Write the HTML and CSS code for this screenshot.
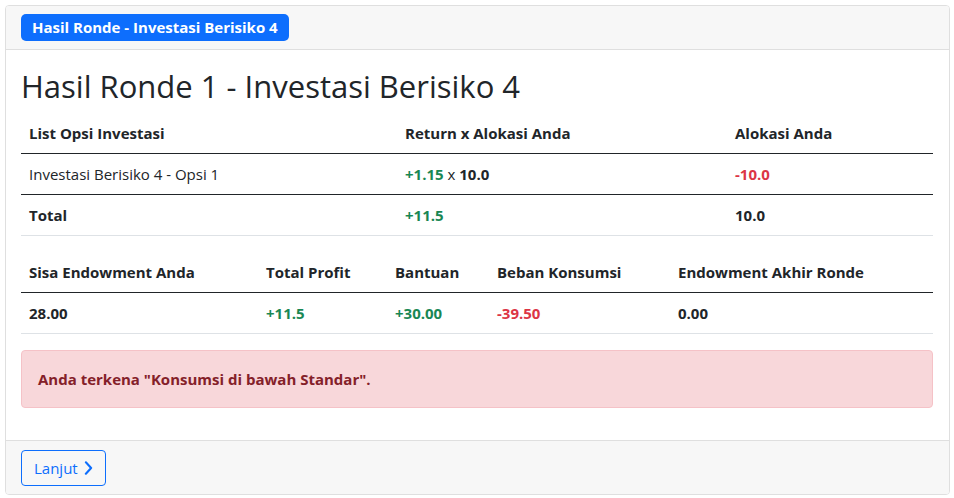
FILE: index.html
```html
<!DOCTYPE html>
<html lang="id">
<head>
<meta charset="utf-8">
<title>Hasil Ronde</title>
<link rel="stylesheet" href="styles.css">
</head>
<body>
<div class="page">
  <div class="card">
    <div class="card-header">
      <span class="badge">Hasil Ronde - Investasi Berisiko 4</span>
    </div>
    <div class="card-body">
      <h1 class="title">Hasil Ronde 1 - Investasi Berisiko 4</h1>
      <table class="tbl tbl-invest">
        <colgroup>
          <col class="c-opsi"><col class="c-return"><col class="c-alokasi">
        </colgroup>
        <thead>
          <tr><th>List Opsi Investasi</th><th>Return x Alokasi Anda</th><th>Alokasi Anda</th></tr>
        </thead>
        <tbody>
          <tr>
            <td>Investasi Berisiko 4 - Opsi 1</td>
            <td><b class="pos">+1.15</b> x <b>10.0</b></td>
            <td><b class="neg">-10.0</b></td>
          </tr>
        </tbody>
        <tfoot>
          <tr><th>Total</th><th class="pos">+11.5</th><th>10.0</th></tr>
        </tfoot>
      </table>
      <table class="tbl tbl-summary">
        <colgroup>
          <col class="c-sisa"><col class="c-profit"><col class="c-bantuan"><col class="c-beban"><col class="c-akhir">
        </colgroup>
        <thead>
          <tr><th>Sisa Endowment Anda</th><th>Total Profit</th><th>Bantuan</th><th>Beban Konsumsi</th><th>Endowment Akhir Ronde</th></tr>
        </thead>
        <tbody>
          <tr><th>28.00</th><th class="pos">+11.5</th><th class="pos">+30.00</th><th class="neg">-39.50</th><th>0.00</th></tr>
        </tbody>
      </table>
      <div class="alert">Anda terkena "Konsumsi di bawah Standar".</div>
    </div>
    <div class="card-footer">
      <button class="btn" type="button">Lanjut <svg class="chev" viewBox="0 0 10 16" width="9" height="14" aria-hidden="true"><polyline points="2,1.5 8,8 2,14.5" fill="none" stroke="currentColor" stroke-width="2.4" stroke-linecap="round" stroke-linejoin="round"/></svg></button>
    </div>
  </div>
</div>
</body>
</html>
```

FILE: styles.css
```css
* { box-sizing: border-box; }
html, body { margin: 0; padding: 0; background: #fff; }
body {
  font-family: "Open Sans", "Noto Sans", sans-serif;
  font-size: 15px;
  line-height: 24px;
  color: #212529;
}
.page { padding: 5px 4px 0 5px; }
.card {
  border: 1px solid #dfdfdf;
  border-radius: 4px;
  background: #fff;
  overflow: hidden;
}
.card-header {
  background: #f7f7f7;
  border-bottom: 1px solid #dfdfdf;
  padding: 8px 16px 8px 15px;
  display: flex;
  align-items: center;
}
.badge {
  display: inline-block;
  background: #0d6efd;
  color: #fff;
  font-weight: 700;
  font-size: 15px;
  line-height: 15px;
  padding: 6px 11px;
  border-radius: 5px;
}
.card-body { padding: 16px 16px 16px 15px; }
.title {
  margin: 0 0 7px 0;
  font-size: 31px;
  font-weight: 500;
  line-height: 40px;
  color: #212529;
}
.tbl {
  width: 100%;
  border-collapse: collapse;
  table-layout: fixed;
  margin-bottom: 16px;
}
.tbl th, .tbl td {
  text-align: left;
  padding: 8px;
  border-bottom: 1px solid #dee2e6;
  vertical-align: top;
  white-space: nowrap;
}
.tbl th { font-weight: 700; }
.tbl thead th { border-bottom-color: #212529; }
.tbl-invest tbody td { border-bottom-color: #212529; }
.c-opsi { width: 376px; }
.c-return { width: 330px; }
.c-alokasi { width: 206px; }
.c-sisa { width: 237px; }
.c-profit { width: 129px; }
.c-bantuan { width: 102px; }
.c-beban { width: 181px; }
.c-akhir { width: 263px; }
.pos { color: #198754; }
.neg { color: #dc3545; }
.alert {
  background: #f8d7da;
  border: 1px solid #f5c2c7;
  border-radius: 4px;
  color: #842029;
  font-weight: 700;
  padding: 16px;
  margin-bottom: 16px;
}
.card-footer {
  background: #f7f7f7;
  border-top: 1px solid #dfdfdf;
  padding: 9px 16px 8px 15px;
  display: flex;
}
.btn {
  font-family: inherit;
  font-size: 15px;
  line-height: 24px;
  height: 36px;
  color: #0d6efd;
  background: transparent;
  border: 1px solid #0d6efd;
  border-radius: 4px;
  padding: 5px 12px;
  display: inline-flex;
  align-items: center;
  gap: 6px;
}
.chev { display: block; }
```
